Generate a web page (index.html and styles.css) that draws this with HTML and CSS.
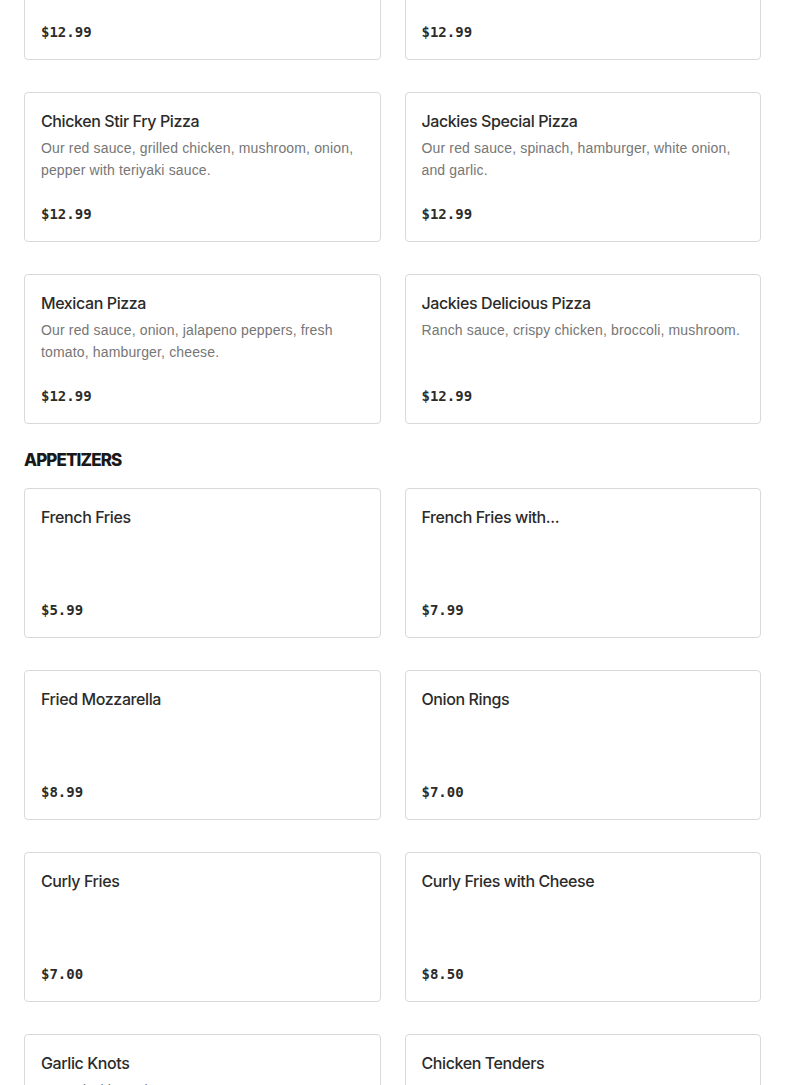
FILE: index.html
```html
<!DOCTYPE html>
<html lang="en">
<head>
<meta charset="utf-8">
<title>Menu</title>
<link rel="stylesheet" href="styles.css">
</head>
<body>
<main class="menu">
  <section class="section section-cut">
    <div class="grid">
      <article class="card">
        <h3 class="card-title">Veggie Pizza</h3>
        <p class="card-desc">Our red sauce, mushroom, onion, green pepper, black olives, tomato.</p>
        <p class="card-price">$12.99</p>
      </article>
      <article class="card">
        <h3 class="card-title">Hawaiian Pizza</h3>
        <p class="card-desc">Our red sauce, ham, pineapple, cheese.</p>
        <p class="card-price">$12.99</p>
      </article>
      <article class="card">
        <h3 class="card-title">Chicken Stir Fry Pizza</h3>
        <p class="card-desc">Our red sauce, grilled chicken, mushroom, onion, pepper with teriyaki sauce.</p>
        <p class="card-price">$12.99</p>
      </article>
      <article class="card">
        <h3 class="card-title">Jackies Special Pizza</h3>
        <p class="card-desc">Our red sauce, spinach, hamburger, white onion, and garlic.</p>
        <p class="card-price">$12.99</p>
      </article>
      <article class="card">
        <h3 class="card-title">Mexican Pizza</h3>
        <p class="card-desc">Our red sauce, onion, jalapeno peppers, fresh tomato, hamburger, cheese.</p>
        <p class="card-price">$12.99</p>
      </article>
      <article class="card">
        <h3 class="card-title">Jackies Delicious Pizza</h3>
        <p class="card-desc">Ranch sauce, crispy chicken, broccoli, mushroom.</p>
        <p class="card-price">$12.99</p>
      </article>
    </div>
  </section>
  <section class="section">
    <h2 class="section-title">APPETIZERS</h2>
    <div class="grid">
      <article class="card">
        <h3 class="card-title">French Fries</h3>
        <p class="card-price">$5.99</p>
      </article>
      <article class="card">
        <h3 class="card-title">French Fries with...</h3>
        <p class="card-price">$7.99</p>
      </article>
      <article class="card">
        <h3 class="card-title">Fried Mozzarella</h3>
        <p class="card-price">$8.99</p>
      </article>
      <article class="card">
        <h3 class="card-title">Onion Rings</h3>
        <p class="card-price">$7.00</p>
      </article>
      <article class="card">
        <h3 class="card-title">Curly Fries</h3>
        <p class="card-price">$7.00</p>
      </article>
      <article class="card">
        <h3 class="card-title">Curly Fries with Cheese</h3>
        <p class="card-price">$8.50</p>
      </article>
      <article class="card">
        <h3 class="card-title">Garlic Knots</h3>
        <p class="card-desc">Served with marinara sauce.</p>
        <p class="card-price">$6.99</p>
      </article>
      <article class="card">
        <h3 class="card-title">Chicken Tenders</h3>
        <p class="card-price">$8.99</p>
      </article>
    </div>
  </section>
</main>
</body>
</html>
```

FILE: styles.css
```css
* { box-sizing: border-box; }
html, body { margin: 0; padding: 0; background: #ffffff; }
body {
  font-family: Inter, "Noto Sans", "Liberation Sans", sans-serif;
  color: #2b2b2b;
  overflow: hidden;
}
.menu {
  padding: 0 24px;
}
.section-cut {
  margin-top: -90px;
}
.section-title {
  margin: 24px 0 16px;
  font-size: 17px;
  line-height: 24px;
  font-weight: 800;
  color: #191919;
  letter-spacing: -0.9px;
}
.grid {
  display: grid;
  grid-template-columns: 1fr 1fr;
  column-gap: 24px;
  row-gap: 32px;
}
.card {
  display: flex;
  flex-direction: column;
  height: 150px;
  padding: 16px;
  border: 1px solid #d9d9d9;
  border-radius: 4px;
  background: #fff;
  overflow: hidden;
}
.card-title {
  margin: 0;
  font-size: 16px;
  line-height: 24px;
  font-weight: 500;
  letter-spacing: -0.4px;
  color: #2b2b2b;
  white-space: nowrap;
  overflow: hidden;
  text-overflow: ellipsis;
}
.card-desc {
  margin: 4px 0 0;
  font-family: "Liberation Sans", Arial, sans-serif;
  font-size: 14px;
  line-height: 22px;
  letter-spacing: 0.15px;
  color: #767676;
}
.card-price {
  margin: auto 0 0;
  font-family: "DejaVu Sans Mono", "Liberation Mono", monospace;
  font-size: 14px;
  line-height: 22px;
  font-weight: 700;
  color: #2b2b2b;
}
```
